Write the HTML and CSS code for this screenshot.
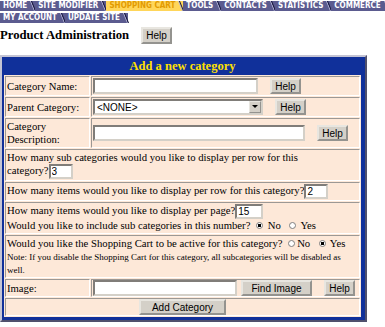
FILE: index.html
```html
<!DOCTYPE html>
<html>
<head>
	<title>Product Administration</title>
	<link rel="stylesheet" href="styles.css">
</head>
<body>
	<div class="tabs">
		<div class="tab-row">
			<span class="tab">HOME</span>
			<span class="tab">SITE MODIFIER</span>
			<span class="tab active">SHOPPING CART</span>
			<span class="tab">TOOLS</span>
			<span class="tab">CONTACTS</span>
			<span class="tab">STATISTICS</span>
			<span class="tab">COMMERCE</span>
		</div>
		<div class="tab-row">
			<span class="tab">MY ACCOUNT</span>
			<span class="tab">UPDATE SITE</span>
		</div>
	</div>

	<div class="title-bar">
		<h1>Product Administration</h1>
		<button class="btn">Help</button>
	</div>

	<div class="panel">
		<div class="panel-title">Add a new category</div>
		<table class="form-table">
			<tr>
				<td class="label">Category Name:</td>
				<td class="field"><input type="text" class="txt name"><button class="btn help">Help</button></td>
			</tr>
			<tr>
				<td class="label">Parent Category:</td>
				<td class="field">
					<span class="select"><span class="select-val">&lt;NONE&gt;</span><span class="select-arrow"></span></span><button class="btn help">Help</button>
				</td>
			</tr>
			<tr>
				<td class="label">Category<br>Description:</td>
				<td class="field"><input type="text" class="txt desc"><button class="btn help">Help</button></td>
			</tr>
			<tr>
				<td colspan="2" class="wide">How many sub categories would you like to display per row for this <span class="nowrap">category?<input type="text" class="txt small" value="3"></span></td>
			</tr>
			<tr>
				<td colspan="2" class="wide">How many items would you like to display per row for this <span class="nowrap">category?<input type="text" class="txt small" value="2"></span></td>
			</tr>
			<tr>
				<td colspan="2" class="wide">How many items would you like to display per page?<input type="text" class="txt small mid" value="15"><br>
				Would you like to include sub categories in this number? <input type="radio" name="inc" checked> No &nbsp;<input type="radio" name="inc"> Yes</td>
			</tr>
			<tr>
				<td colspan="2" class="wide">Would you like the Shopping Cart to be active for this category? <input type="radio" name="act">No &nbsp;<input type="radio" name="act" checked> Yes<br>
				<span class="note">Note: If you disable the Shopping Cart for this category, all subcategories will be disabled as well.</span></td>
			</tr>
			<tr class="low">
				<td class="label">Image:</td>
				<td class="field"><input type="text" class="txt img"><button class="btn find">Find Image</button><button class="btn help">Help</button></td>
			</tr>
			<tr class="low">
				<td colspan="2" class="center"><button class="btn add">Add Category</button></td>
			</tr>
		</table>
	</div>
</body>
</html>
```

FILE: styles.css
```css
body {
	margin: 0;
	background: #fff;
	font-family: "Liberation Serif", serif;
	font-size: 10.7px;
	color: #000;
}

/* top tabs */
.tabs {
	padding-top: 1px;
	display: flex;
	flex-direction: column;
	gap: 2px;
}
.tab-row {
	display: flex;
	height: 10px;
}
.tab {
	position: relative;
	background: #5b5b8f;
	color: #fff;
	font-family: "DejaVu Sans Condensed", "DejaVu Sans", sans-serif;
	font-weight: bold;
	font-size: 8px;
	line-height: 10px;
	padding: 0 8px 0 3px;
	white-space: nowrap;
}
.tab::after {
	content: "";
	position: absolute;
	top: 0;
	right: 3px;
	height: 10px;
	border-left: 1px solid #15153a;
	box-shadow: -1px 0 0 #b8b8d8;
	transform: skewX(22deg);
	transform-origin: top;
}
.tab.active {
	background: #ffd65a;
	color: #e39b00;
}

/* heading */
.title-bar {
	display: flex;
	align-items: center;
	gap: 12px;
	margin-top: 4px;
	height: 17px;
}
h1 {
	margin: 0;
	font-size: 12.7px;
	font-weight: bold;
}

/* buttons and inputs */
.btn {
	font-family: "Liberation Sans", Arial, sans-serif;
	font-size: 10px;
	color: #000;
	background: #d4d0c8;
	border: 2px outset #e8e6e0;
	padding: 0;
	height: 16px;
	width: 31px;
	vertical-align: middle;
}
.title-bar .btn {
	height: 17px;
}
.txt {
	font-family: "Liberation Sans", Arial, sans-serif;
	font-size: 10px;
	height: 16px;
	box-sizing: border-box;
	border: 2px inset #d4d0c8;
	background: #fff;
	padding: 0 2px;
	margin: 0;
	vertical-align: middle;
}
.txt.name { width: 165px; }
.txt.desc { width: 212px; }
.txt.img { width: 144px; }
.txt.small { width: 24px; height: 15px; padding: 0 1px; }
.txt.mid { width: 28px; }

.nowrap {
	white-space: nowrap;
}

.select {
	display: inline-flex;
	align-items: center;
	justify-content: space-between;
	box-sizing: border-box;
	width: 170px;
	height: 16px;
	border: 2px inset #d4d0c8;
	background: #fff;
	vertical-align: middle;
	font-family: "Liberation Sans", Arial, sans-serif;
	font-size: 10px;
}
.select-val {
	padding-left: 2px;
}
.select-arrow {
	position: relative;
	width: 12px;
	height: 12px;
	box-sizing: border-box;
	background: #d4d0c8;
	border: 1px outset #e8e6e0;
}
.select-arrow::after {
	content: "";
	position: absolute;
	left: 2px;
	top: 3px;
	border-left: 3px solid transparent;
	border-right: 3px solid transparent;
	border-top: 3px solid #000;
}

input[type=radio] {
	appearance: none;
	width: 7px;
	height: 7px;
	margin: 0 2px 0 3px;
	border-radius: 50%;
	border: 1px solid #808080;
	background: #fff;
	vertical-align: baseline;
}
input[type=radio]:checked {
	background: radial-gradient(circle, #000 0 1.5px, #fff 2px);
}

/* form panel */
.panel {
	width: 367px;
	box-sizing: border-box;
	margin-top: 11px;
	background: #10309a;
	border: 2px solid;
	border-color: #c4c4d4 #50506c #50506c #c4c4d4;
	padding: 0 4px 3px 2px;
}
.panel-title {
	height: 18px;
	line-height: 18px;
	text-align: center;
	color: #ffe000;
	font-weight: bold;
	font-size: 12.5px;
}
.form-table {
	width: 357px;
	border-collapse: separate;
	border-spacing: 1px;
	background: #fde8d8;
	font-size: 10.7px;
	line-height: 13px;
}
.form-table td {
	border: 1px solid;
	border-color: #9c9894 #ffffff #ffffff #9c9894;
	padding: 1px;
	vertical-align: middle;
}
.form-table td.label {
	width: 81px;
}
.form-table tr.low td {
	padding: 0 1px;
}
.field .help {
	margin-left: 12px;
}
.field .find {
	width: 71px;
	margin-left: 4px;
}
.field .find + .help {
	margin-left: 12px;
}
.note {
	font-size: 9px;
	line-height: 11px;
}
.center {
	text-align: center;
}
.btn.add {
	width: 87px;
}
```
